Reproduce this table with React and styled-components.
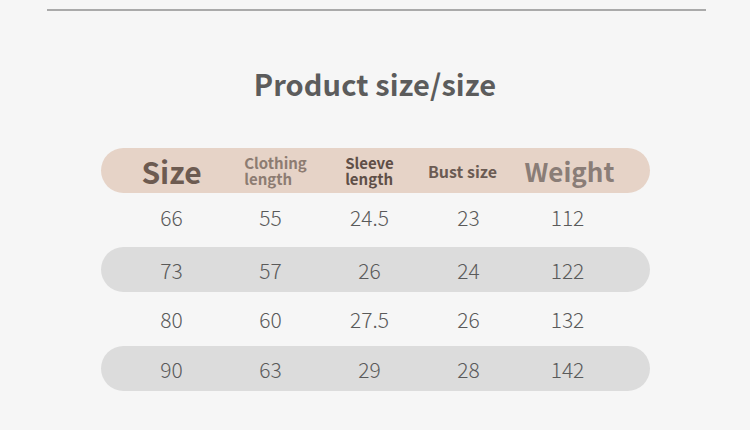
import React from 'react';
import styled, { createGlobalStyle } from 'styled-components';

const GlobalStyle = createGlobalStyle`
  html, body {
    margin: 0;
    padding: 0;
    background: #f6f6f6;
  }
  body {
    font-family: "Noto Sans CJK SC", "Noto Sans", sans-serif;
  }
`;

const rows = [
    ['66', '55', '24.5', '23', '112'],
    ['73', '57', '26', '24', '122'],
    ['80', '60', '27.5', '26', '132'],
    ['90', '63', '29', '28', '142'],
];

const Page = styled.div`
    width: 750px;
    height: 430px;
    padding-top: 9px;
    box-sizing: border-box;
    background: #f6f6f6;
    overflow: hidden;
`;

const Rule = styled.div`
    margin: 0 44px 0 47px;
    height: 2px;
    background: #aaaaaa;
`;

const Title = styled.h1`
    margin: 52px 0 0;
    text-align: center;
    font-size: 29px;
    line-height: 40px;
    font-weight: 700;
    color: #5c5c5c;
    letter-spacing: 0.1px;
`;

const Table = styled.div`
    margin: 45px 100px 0 101px;
    display: flex;
    flex-direction: column;
`;

const Row = styled.div`
    display: grid;
    grid-template-columns: repeat(5, 1fr);
    align-items: center;
    padding: 0 33px ${p => p.$lift || 0}px 21px;
    box-sizing: border-box;
    height: ${p => p.$height}px;
    border-radius: 23px;
    background: ${p => p.$bg || 'transparent'};
`;

const HeadCell = styled.div`
    display: flex;
    justify-content: center;
    padding-left: ${p => Math.max(0, p.$shift || 0) * 2}px;
    padding-right: ${p => Math.max(0, -(p.$shift || 0)) * 2}px;
    font-weight: 700;
    font-size: ${p => p.$size}px;
    line-height: ${p => (p.$size > 20 ? '1' : '16px')};
    color: ${p => p.$color};
    white-space: nowrap;
    span { text-align: left; }
`;

const Cell = styled.div`
    text-align: center;
    font-weight: 300;
    font-size: 21px;
    color: #5a5a5a;
`;

function App() {
    return (
        <Page>
            <GlobalStyle />
            <Rule />
            <Title>Product size/size</Title>
            <Table>
                <Row $height={45} $bg="#e6d3c7">
                    <HeadCell $size={30} $color="#6d5b51"><span>Size</span></HeadCell>
                    <HeadCell $size={15} $color="#8d7c72" $shift={5}><span>Clothing<br />length</span></HeadCell>
                    <HeadCell $size={15} $color="#5f4f47"><span>Sleeve<br />length</span></HeadCell>
                    <HeadCell $size={16} $color="#6b5b53" $shift={-6}><span>Bust size</span></HeadCell>
                    <HeadCell $size={26} $color="#8a7d77" $shift={2}><span>Weight</span></HeadCell>
                </Row>
                {rows.map((r, i) => (
                    <Row
                        key={i}
                        $height={i % 2 ? 45 : 54}
                        $bg={i % 2 ? '#dcdcdc' : null}
                        $lift={i === 0 ? 7 : 0}
                    >
                        {r.map((v, j) => <Cell key={j}>{v}</Cell>)}
                    </Row>
                ))}
            </Table>
        </Page>
    );
}

export default App;
